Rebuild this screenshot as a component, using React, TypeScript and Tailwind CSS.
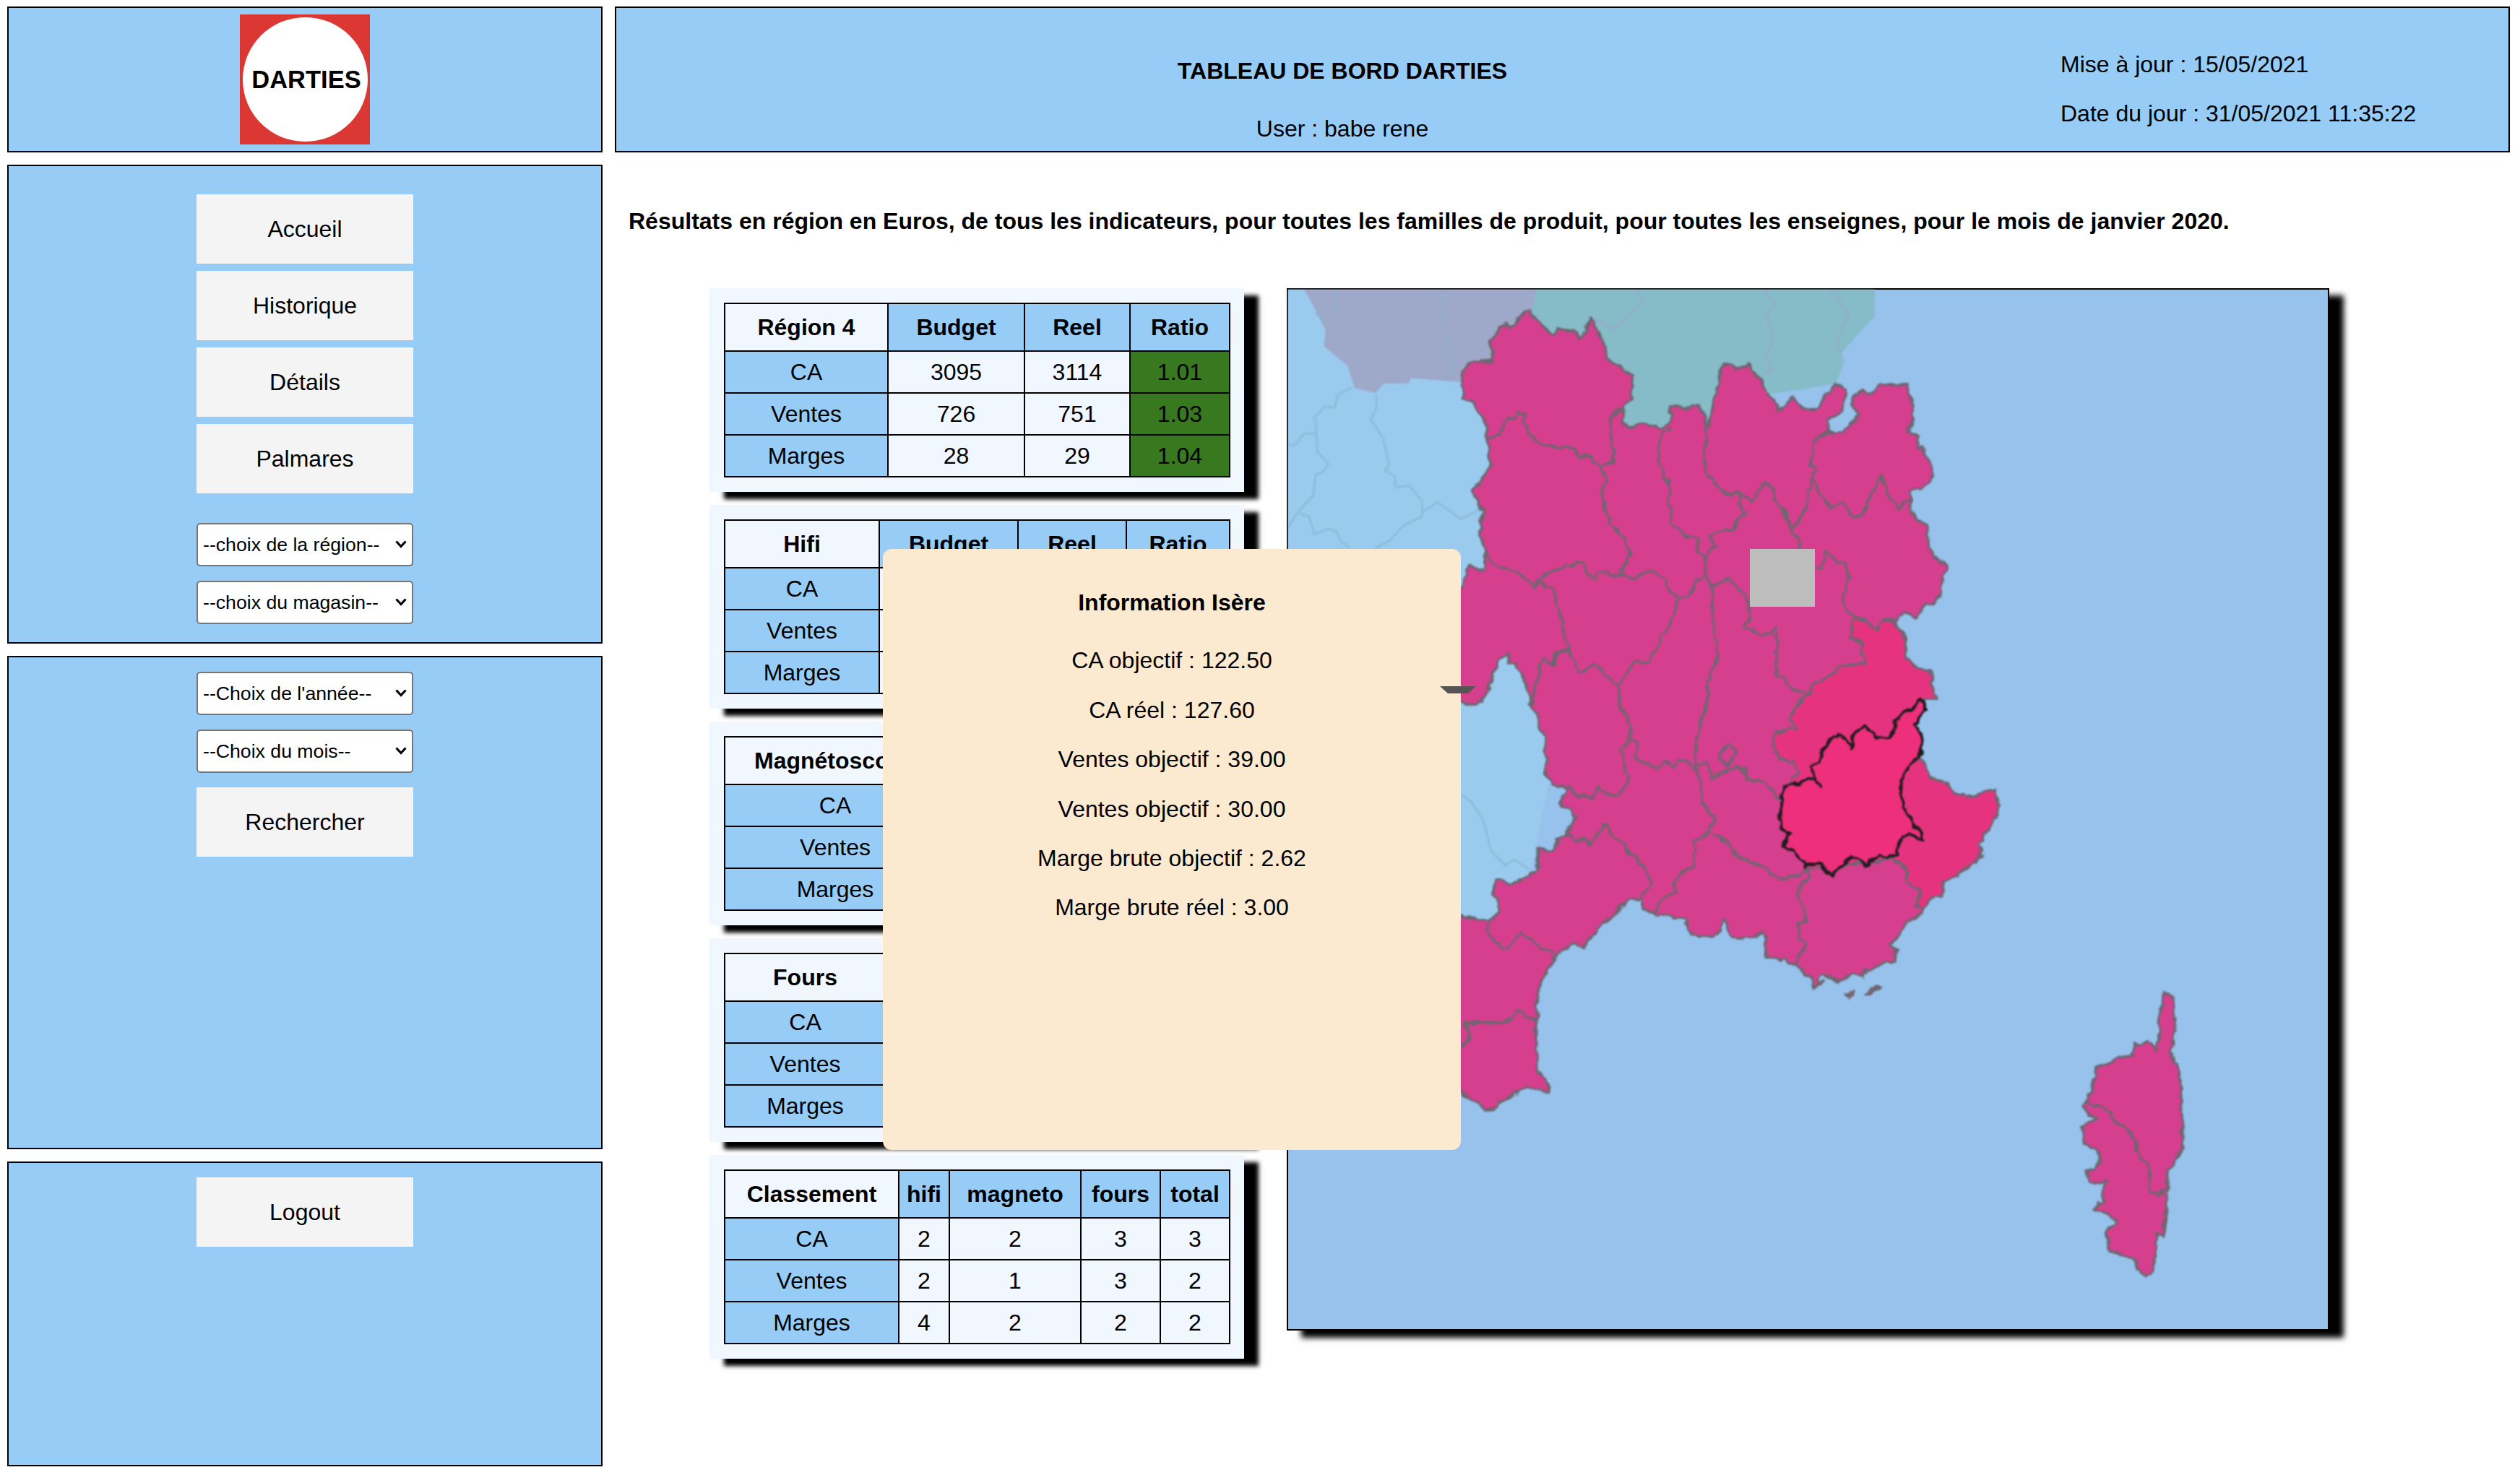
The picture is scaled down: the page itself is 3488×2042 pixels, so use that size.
const ORIGINS: Record<string, [number, number, number]> = {
  a: [1781, 399, 2.613],
  b: [2260, 399, 2.613],
  c: [2020, 900, 3],
  d: [2400, 860, 3],
  e: [2020, 1180, 2.45],
  f: [2840, 1340, 3],
  g: [2400, 1050, 3],
}

// map outlines are traced from crops, a letter switches to that crop's origin
const pts = (spec: string) => {
  let o = ORIGINS.a
  const out: string[] = []
  for (const tok of spec.trim().split(/\s+/)) {
    if (ORIGINS[tok]) {
      o = ORIGINS[tok]
      continue
    }
    const [x, y] = tok.split(',').map(Number)
    out.push(`${(o[0] + x / o[2]).toFixed(1)},${(o[1] + y / o[2]).toFixed(1)}`)
  }
  return out.join(' ')
}

const LAND = `a 628,335 640,285 665,268 740,262 745,235 733,185 760,160 790,125 810,138 850,100 880,80 905,115 935,145 960,168 985,145 1005,158 1040,145 1055,185 1085,155 1100,110 1120,150 1148,200 1155,255 1190,275 1220,290 1250,320 1245,400 1215,430 1212,480 1250,505 1280,490 1310,500 1340,495 1360,505 1385,480 1392,425 1420,430 1445,440 1470,425 1495,425 1510,470 1520,500
b 325,275 350,280 370,295 410,275 425,285 440,315 465,330 490,385 520,420 525,440 550,430 580,395 610,425 620,440 665,435 700,385 735,345 770,375 755,450 705,480 705,520 760,525 800,480 820,455 798,440 800,395 825,370 850,385 895,350 995,350 995,390 1020,435 1000,520 1035,540 1030,585 1050,580 1075,625 1090,675 1050,720 1005,730 1003,800 1030,835 1065,855 1070,935 1100,975 1135,1012 1115,1075 1120,1105 1090,1135 1060,1145 1025,1190 985,1175 945,1205 985,1270 985,1330 1025,1370 1080,1385 1080,1430 1100,1480
d 795,322 795,370 755,430 785,495 770,565 815,650 880,670 920,710 965,735 1020,715 1085,695 1105,770 1080,830 1050,870 1020,920 1025,980 960,1030 940,1050 870,1085 865,1140 800,1160 785,1200
g 775,650 715,680 695,730 640,775 680,790 670,850 625,850 550,880 540,910 490,895 460,920 440,925 385,910 360,895 350,920 375,925 335,950 315,915 265,860 230,860 215,830 130,825 135,750 115,722 75,745 0,742
e 925,285 895,225 880,265 865,285 790,275 770,260 775,225 660,210 625,195 620,155 575,160 540,190 510,225 470,255 420,320 385,312 340,345 300,390 270,460 262,520 262,745 295,770 305,815 270,805 230,790 185,820 140,840 130,865 85,875 50,835 5,815 -50,815 -50,220 5,220 60,225 100,235 130,210 135,170 115,140 125,95 155,95 170,110 215,90 265,65
c 325,825 370,835 400,830 405,785 445,770 450,745 485,690 465,665 415,635 445,570 395,560 350,500 360,460 350,420 355,370 330,320 330,285 300,225 270,125 240,60 205,60 200,10 160,50 135,120 120,170 95,210 70,230 30,225 5,210
a 600,1490 600,1080 630,1080 660,1005 715,1025 715,950 700,880 715,810 670,735 740,640 725,540 715,480 680,415 640,395`

const BRIGHT = `b 800,1190 850,1205 880,1240 910,1200 945,1205 985,1270 985,1330 1025,1370 1080,1385 1080,1430 1100,1480
d 795,322 795,370 755,430 785,495 770,565 815,650 880,670 920,710 965,735 1020,715 1085,695 1105,770 1080,830 1050,870 1020,920 1025,980 960,1030 940,1050 870,1085 865,1140 800,1160 785,1200
g 765,610 770,545 720,510 710,450 660,420 300,460
d 185,735 270,630 240,580 190,570 160,515 175,460 255,450 235,410 260,340
b 640,1470 650,1435 705,1405 745,1375 800,1360 835,1360 830,1280 785,1265`

const ISERE = `d 795,335 770,325 720,375 670,420 650,480 590,485 545,435 490,470 490,530 465,490 430,470 370,525 350,590 320,605 325,640 355,680 340,660 290,660 250,680 220,680 190,730 195,790 190,860 225,885 205,945 250,955 295,1020 320,1005 365,1005 405,1065 445,1020 490,975 550,1020 575,985 610,975 625,985 680,970 685,915 730,880 755,905 785,905 780,880 710,790 690,700 705,630 770,565 785,495 755,430 795,370`

const CORSICA = `f 460,100 490,105 500,130 515,250 495,350 530,430 540,600 540,750 480,850 475,1050 465,1110 430,1100 440,1120 425,1220 410,1270 390,1280 355,1255 345,1210 240,1170 222,1095 270,1050 210,1015 175,1005 210,965 220,880 155,895 145,850 175,840 205,795 180,750 135,730 125,660 185,630 150,595 130,575 150,530 175,510 170,460 195,410 235,400 265,375 330,365 345,315 400,305 430,345 450,250 440,230 455,170`

const ISLANDS = ['g 465,980 495,965 495,985 480,995', 'g 550,980 600,945 605,950 570,985']

const BORDERS = [
  'a 730,540 760,535 790,480 825,470 835,452 865,455 860,490 880,535 930,570 1040,575 1055,610 1100,605 1135,650 1185,625 1175,550 1170,465 1215,435',
  'a 1135,650 1155,690 1140,750 1170,850 1225,910 1240,965 1210,1020 1215,1040',
  'a 715,955 770,1010 830,1020 860,1050 895,1085 925,1045 1005,1005 1065,995 1110,1050 1140,1030 1210,1040 1250,1050 1310,1020 1370,1050 1385,1100 1420,1120 1460,1110 1480,1060 1515,1040',
  'a 1400,505 1360,520 1340,590 1345,630 1385,720 1385,800 1395,860 1440,895 1485,905 1485,960 1520,970 1515,1040',
  'a 1420,1120 1395,1190 1340,1290 1310,1350 1250,1360 1200,1440',
  'a 920,1055 965,1100 990,1190 1000,1250 1020,1300 1060,1395 1110,1355 1200,1440 1205,1510 1230,1568',
  'a 1020,1300 975,1320 955,1365 930,1340 905,1420 885,1500',
  'b 270,505 260,600 260,655 320,740 385,745 430,770 460,735 480,700 505,735 545,810 580,870 605,940',
  'b 385,750 385,775 410,810 360,870 275,890 300,930 265,970 265,1040',
  'b 705,520 650,555 645,640 655,650 630,790 610,815 580,870',
  'b 655,680 670,730 710,790 760,780 795,825 830,825 870,730 895,680 915,715 920,745 960,800 1000,765',
  'b 660,1010 680,1015 695,950 735,985 770,1005 780,1050 760,1110 770,1170 800,1190 850,1205 880,1240 910,1200 940,1195',
  'b 800,1190 785,1265 830,1280 835,1360 800,1360 745,1375 705,1405 650,1435 640,1470 590,1500 570,1568',
  'b 265,1040 285,1080 290,1200 310,1320 270,1420 270,1500 245,1568 c 1000,290 980,400 985,500 1005,570 1005,630 1060,700 1035,755',
  'b 285,1080 350,1050 400,1100 420,1140 420,1190 405,1230 490,1250 520,1225 520,1405 550,1415 590,1455 640,1470',
  'c 300,225 320,120 350,35 385,65 410,10 465,0',
  'c 660,155 665,230 710,320 710,365 670,415 690,480 695,560 660,600 630,605 580,565 555,610 490,605 450,560',
  'c 710,365 735,385 735,460 780,465 820,505 860,450 885,490 920,450 980,500',
  'c 1035,755 980,800 975,900 920,920 890,980 900,1000 840,1040 810,1085',
  'c 1035,755 1090,780 1150,860 1200,885',
  'c 985,470 1030,470 1050,530 1110,500 1170,490 1200,540',
  'c 1075,450 1110,385 1150,425 1120,485 1075,450',
  'c 450,765 485,800 515,780 545,815 570,770 610,720 635,780 675,790 710,845 780,920 795,965 760,1020 765,1075 810,1090',
  'e 5,660 35,630 20,575 155,578 195,535 262,575',
  'e 105,232 95,265 120,305 165,330 205,270 245,300 325,350',
  'g 0,380 60,440 110,440 190,500 240,495 310,465 315,495 270,520 265,570 280,600 300,670 270,690 270,745 300,780 265,820 265,860',
  'g 0,25 50,40 50,90 130,100 185,165',
  'g 660,420 710,450 720,510 770,545 765,610 785,630',
  'f 135,560 200,580 250,595 265,640 330,690 360,760 375,800 400,810 410,930 440,940 475,915',
]

const FAINT = [
  'a 0,560 25,570 65,525 105,525',
  'a 95,475 135,430 175,430 185,385 235,360',
  'a 325,385 325,430 305,475 350,545 370,640 355,660 390,680 395,720 445,715 490,770 490,825 420,860 370,915 320,940',
  'a 105,475 110,590 150,635 130,665 105,675 95,750 40,810 5,865',
  'a 490,810 545,775 630,835 700,800',
  'a 45,815 80,825 100,890 150,870 180,880 195,915 230,940',
  'c 5,600 50,630 100,710 130,830 190,895 225,870 290,910',
]

const FAINT_TOP = [
  'a 185,0 165,100 145,125 105,90',
  'a 580,0 550,60 590,200 600,310 585,335',
  'a 1260,0 1285,45 1240,100 1175,150 1125,115 1105,115',
  'b 465,0 515,60 480,95 510,180 480,250 505,300 470,310',
  'b 710,0 780,90 745,170 740,220 755,235',
]

const FranceMap = () => (
  <svg viewBox="1783 401 1439 1439" className="block h-full w-full blur-[0.8px]">
    <defs>
      {/* the traced outlines are too smooth, this roughens them like the real borders */}
      <filter id="rough" x="1783" y="401" width="1439" height="1439" filterUnits="userSpaceOnUse" colorInterpolationFilters="sRGB">
        <feTurbulence type="fractalNoise" baseFrequency="0.07" numOctaves="2" seed="4" />
        <feDisplacementMap in="SourceGraphic" scale="11" xChannelSelector="R" yChannelSelector="G" />
      </filter>
    </defs>
    <polygon points="1783,401 2100,401 2200,800 2100,1300 1783,1300" fill="#9acbee" />
    {FAINT.map((d) => (
      <polyline key={d} points={pts(d)} fill="none" stroke="#8dbcdc" strokeWidth="3" />
    ))}
    <polygon
      points={pts('a 60,0 105,80 140,150 135,210 220,280 245,360 320,380 350,345 440,345 450,325 630,340 800,300 905,60 905,0')}
      fill="#9ea8c9"
    />
    <polygon
      points={pts('a 905,0 880,100 1000,300 1250,520 1520,520 b 400,400 735,345 765,265 755,235 810,170 875,100 875,0')}
      fill="#86bbc8"
    />
    {FAINT_TOP.map((d) => (
      <polyline key={d} points={pts(d)} fill="none" stroke="#93aecb" strokeWidth="3" />
    ))}
    <g filter="url(#rough)">
      <g stroke="#6e6670" strokeWidth="3.5" strokeLinejoin="round">
        <polygon points={pts(LAND)} fill="#d53f8e" />
        <polygon points={pts(CORSICA)} fill="#d53f8e" />
        {ISLANDS.map((d) => (
          <polygon key={d} points={pts(d)} fill="#a85a8c" />
        ))}
        <polygon points={pts(BRIGHT)} fill="#e63380" />
        {BORDERS.map((d) => (
          <polyline key={d} points={pts(d)} fill="none" />
        ))}
      </g>
      <polygon points={pts(ISERE)} fill="#ee2f7c" stroke="#1c1c1c" strokeWidth="4" strokeLinejoin="round" />
    </g>
  </svg>
)

const Chevron = () => (
  <svg viewBox="0 0 16 11" className="absolute right-[9px] top-[24px] h-[11px] w-[16px]" fill="none" stroke="#000" strokeWidth="3.2">
    <path d="M1.5 1.5 8 8.5l6.5-7" />
  </svg>
)

const Select = ({ label }: { label: string }) => (
  <div className="relative h-[60px] w-[300px]">
    <select className="h-full w-full appearance-none rounded-[5px] border-2 border-[#767676] bg-white pl-[7px] text-[26.67px] text-black">
      <option>{label}</option>
    </select>
    <Chevron />
  </div>
)

const NavButton = ({ label }: { label: string }) => (
  <button className="h-[96px] w-[300px] bg-[#f4f4f4] text-[32px] text-black">{label}</button>
)

type TableProps = {
  title: string
  heads: string[]
  widths: string[]
  rows: [string, ...string[]][]
  green?: boolean
}

const cell = 'border-2 border-black text-center'

const DataTable = ({ title, heads, widths, rows, green }: TableProps) => (
  <div className="h-[282px] w-[740px] bg-[#f0f7ff] p-[20px] shadow-[20px_10px_6px_#000]">
    <table className="w-[699px] table-fixed border-collapse">
      <colgroup>
        {widths.map((w, i) => (
          <col key={i} className={w} />
        ))}
      </colgroup>
      <thead>
        <tr className="h-[66px]">
          <th className={`${cell} bg-[#f0f7ff] font-bold`}>{title}</th>
          {heads.map((h, i) => (
            <th key={i} className={`${cell} bg-[#96ccf6] font-bold`}>{h}</th>
          ))}
        </tr>
      </thead>
      <tbody>
        {rows.map(([name, ...vals]) => (
          <tr key={name} className="h-[58px]">
            <td className={`${cell} bg-[#96ccf6]`}>{name}</td>
            {heads.map((_, i) => (
              <td key={i} className={`${cell} ${green && i === heads.length - 1 ? 'bg-[#38781f]' : 'bg-[#f0f7ff]'}`}>{vals[i]}</td>
            ))}
          </tr>
        ))}
      </tbody>
    </table>
  </div>
)

const BRR = ['Budget', 'Reel', 'Ratio']
const HIDDEN = ['', '', ''] // these columns sit fully under the tooltip
const EMPTY: [string, ...string[]][] = [['CA'], ['Ventes'], ['Marges']]

const INFO = ['CA objectif : 122.50', 'CA réel : 127.60', 'Ventes objectif : 39.00', 'Ventes objectif : 30.00', 'Marge brute objectif : 2.62', 'Marge brute réel : 3.00']

export default function App() {
  return (
    <div className="flex h-[2042px] w-[3488px] gap-[17px] overflow-hidden bg-white pl-[10px] pt-[9px] font-['Liberation_Sans',Arial,sans-serif] text-[32px] leading-[37px] text-black">
      {/* Left column */}
      <div className="flex w-[824px] flex-col gap-[17px]">
        <div className="flex h-[202px] items-center justify-center border-2 border-black bg-[#96ccf6]">
          <div className="flex h-[180px] w-[180px] items-center justify-center bg-[#dc3833]">
            <div className="flex h-[172px] w-[173px] items-center justify-center rounded-full bg-white pl-[4px] text-[34.5px] font-bold">DARTIES</div>
          </div>
        </div>
        <div className="flex h-[663px] flex-col items-center border-2 border-black bg-[#96ccf6] pt-[39px]">
          <div className="flex flex-col gap-[10px]">
            <NavButton label="Accueil" />
            <NavButton label="Historique" />
            <NavButton label="Détails" />
            <NavButton label="Palmares" />
          </div>
          <div className="mt-[41px] flex flex-col gap-[20px]">
            <Select label="--choix de la région--" />
            <Select label="--choix du magasin--" />
          </div>
        </div>
        <div className="flex h-[683px] flex-col items-center gap-[20px] border-2 border-black bg-[#96ccf6] pt-[20px]">
          <Select label="--Choix de l'année--" />
          <Select label="--Choix du mois--" />
          <NavButton label="Rechercher" />
        </div>
        <div className="flex h-[422px] flex-col items-center border-2 border-black bg-[#96ccf6] pt-[20px]">
          <NavButton label="Logout" />
        </div>
      </div>

      {/* Right column */}
      <div className="flex w-[2623px] flex-col">
        <div className="flex h-[202px] border-2 border-black bg-[#96ccf6]">
          <div className="flex w-[2010px] flex-col items-center gap-[43px] pt-[69px]">
            <p className="font-bold">TABLEAU DE BORD DARTIES</p>
            <p>User : babe rene</p>
          </div>
          <div className="-ml-[11px] flex flex-col gap-[31px] pt-[60px]">
            <p>Mise à jour : 15/05/2021</p>
            <p>Date du jour : 31/05/2021 11:35:22</p>
          </div>
        </div>
        <p className="ml-[19px] mt-[77px] font-bold">
          Résultats en région en Euros, de tous les indicateurs, pour toutes les familles de produit, pour toutes les enseignes, pour le mois de janvier 2020.
        </p>

        <div className="relative ml-[131px] mt-[74px] flex gap-[59px]">
          <div className="flex flex-col gap-[18px]">
            <DataTable
              title="Région 4"
              heads={BRR}
              widths={['w-[226px]', 'w-[189px]', 'w-[146px]', 'w-[138px]']}
              rows={[['CA', '3095', '3114', '1.01'], ['Ventes', '726', '751', '1.03'], ['Marges', '28', '29', '1.04']]}
              green
            />
            <DataTable title="Hifi" heads={BRR} widths={['w-[214px]', 'w-[192px]', 'w-[150px]', 'w-[143px]']} rows={EMPTY} />
            <DataTable title="Magnétoscope" heads={HIDDEN} widths={['w-[306px]', 'w-[150px]', 'w-[120px]', 'w-[123px]']} rows={EMPTY} />
            <DataTable title="Fours" heads={HIDDEN} widths={['w-[223px]', 'w-[192px]', 'w-[150px]', 'w-[134px]']} rows={EMPTY} />
            <DataTable
              title="Classement"
              heads={['hifi', 'magneto', 'fours', 'total']}
              widths={['w-[241px]', 'w-[70px]', 'w-[182px]', 'w-[110px]', 'w-[96px]']}
              rows={[['CA', '2', '2', '3', '3'], ['Ventes', '2', '1', '3', '2'], ['Marges', '4', '2', '2', '2']]}
            />
          </div>

          <div className="h-[1443px] w-[1443px] border-2 border-black bg-[#97c2ec] shadow-[20px_10px_8px_#000]">
            <FranceMap />
          </div>

          {/* Hover tooltip over the map */}
          <div className="absolute left-[240px] top-[361px] flex h-[832px] w-[800px] flex-col items-center gap-[31.4px] rounded-[12px] bg-[#fbe9d0] pt-[56px]">
            <p className="mb-[12px] font-bold">Information Isère</p>
            {INFO.map((line, i) => (
              <p key={i}>{line}</p>
            ))}
          </div>
          <svg viewBox="0 0 50 10" className="absolute left-[1011px] top-[551px] h-[10px] w-[50px]">
            <polygon points="0,0 50,0 39,10 11,10" fill="#555" />
          </svg>
          <div className="absolute left-[1440px] top-[361px] h-[80px] w-[90px] bg-[#bdbdbd]" />
        </div>
      </div>
    </div>
  )
}
